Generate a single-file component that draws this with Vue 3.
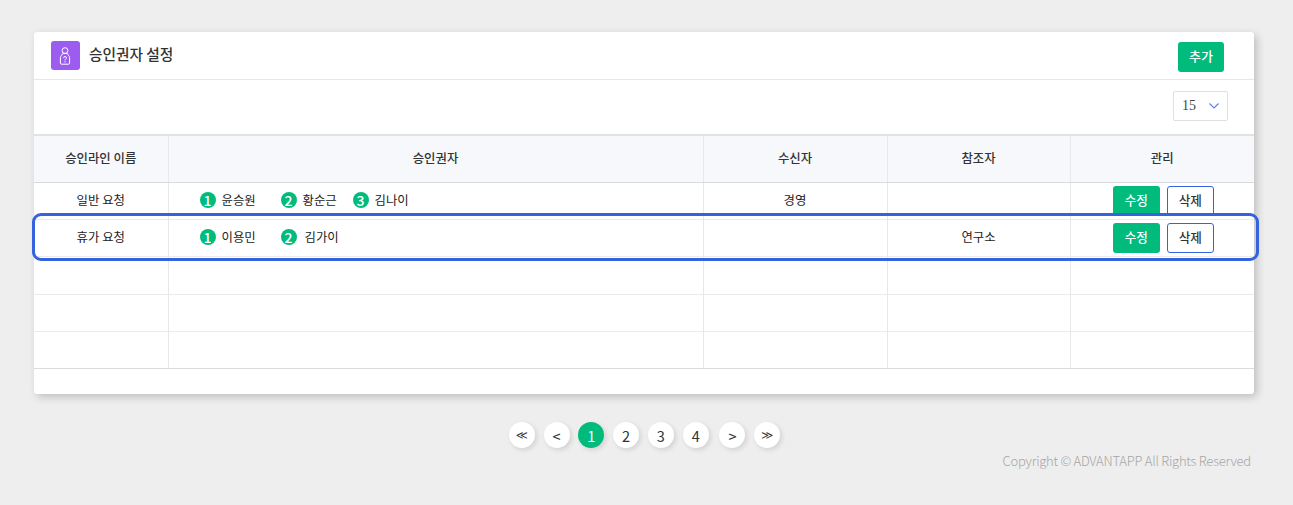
<script setup>
const cols = [134, 535, 184, 183, 184]
const heads = ['승인라인 이름', '승인권자', '수신자', '참조자', '관리']
const rows = [
  { name: '일반 요청', approvers: ['윤승원', '황순근', '김나이'], to: '경영', cc: '' },
  { name: '휴가 요청', approvers: ['이용민', '김가이'], to: '', cc: '연구소' },
  { name: '', approvers: [], to: '', cc: '' },
  { name: '', approvers: [], to: '', cc: '' },
  { name: '', approvers: [], to: '', cc: '' }
]
const pages = [
  { t: '≪', c: 'dbl' },
  { t: '<', c: 'arr' },
  { t: '1', c: 'on' },
  { t: '2', c: '' },
  { t: '3', c: '' },
  { t: '4', c: '' },
  { t: '>', c: 'arr next' },
  { t: '≫', c: 'dbl' }
]
</script>

<template>
  <div class="page">
    <section class="card">
      <header class="head">
        <div class="title">
          <span class="icon">
            <svg width="14" height="20" viewBox="0 0 14 20" fill="none" stroke="#fff" stroke-width="1">
              <g transform="translate(-1 0)">
                <circle cx="7" cy="4.6" r="2.9" />
                <path d="M4.8 7.4 L3.3 9.6 Q2.4 10.6 2.4 11.8 V17.2 Q2.4 18.2 3.4 18.2 H10.6 Q11.6 18.2 11.6 17.2 V11.8 Q11.6 10.6 10.7 9.6 L9.2 7.4 Z" />
                <path d="M5.5 11.8 Q5.6 10.6 7 10.6 Q8.5 10.6 8.5 11.8 Q8.5 12.6 7.6 13.1 Q7 13.4 7 14.3" />
                <path d="M7 15.2 V16.4" />
              </g>
            </svg>
          </span>
          <h1>승인권자 설정</h1>
        </div>
        <button class="btn green add">추가</button>
      </header>
      <div class="tools">
        <div class="select">
          <span>15</span>
          <svg width="10" height="6" viewBox="0 0 10 6" fill="none" stroke="#5b7cf0" stroke-width="1.1">
            <path d="M0.5 0.5 L5 5 L9.5 0.5" />
          </svg>
        </div>
      </div>
      <div class="table-wrap">
        <table>
          <colgroup><col v-for="(c, i) in cols" :key="i" :style="{ width: c + 'px' }" /></colgroup>
          <thead>
            <tr><th v-for="h in heads" :key="h">{{ h }}</th></tr>
          </thead>
          <tbody>
            <tr v-for="(r, i) in rows" :key="i" :class="'row' + i">
              <td>{{ r.name }}</td>
              <td>
                <div class="list">
                  <span v-for="(a, n) in r.approvers" :key="a" class="person" :class="'p' + n">
                    <i class="num">{{ n + 1 }}</i><em>{{ a }}</em>
                  </span>
                </div>
              </td>
              <td>{{ r.to }}</td>
              <td>{{ r.cc }}</td>
              <td class="act">
                <div v-if="r.name" class="actions">
                  <button class="btn green">수정</button>
                  <button class="btn line">삭제</button>
                </div>
              </td>
            </tr>
          </tbody>
        </table>
        <div class="highlight"></div>
      </div>
      <div class="foot"></div>
    </section>
    <nav class="pager">
      <span v-for="(p, i) in pages" :key="i" class="pg" :class="p.c">{{ p.t }}</span>
    </nav>
    <p class="copy">Copyright © ADVANTAPP All Rights Reserved</p>
  </div>
</template>

<style>
html, body { margin: 0; background: #eeeeee; }
</style>

<style scoped>
.page {
  width: 1293px;
  height: 505px;
  box-sizing: border-box;
  padding: 32px 39px 0 34px;
  background: #eeeeee;
  font-family: "Noto Sans CJK KR", "Noto Sans", sans-serif;
  color: #333;
  overflow: hidden;
}
.card {
  width: 1220px;
  height: 362px;
  background: #fff;
  border-radius: 3px;
  box-shadow: 3px 3px 8px rgba(0, 0, 0, 0.2);
  display: flex;
  flex-direction: column;
}
.head {
  height: 47px;
  border-bottom: 1px solid #e6e6e6;
  display: flex;
  align-items: center;
  justify-content: space-between;
  padding: 0 30px 0 17px;
  flex: none;
}
.title { display: flex; align-items: center; gap: 9px; }
.icon {
  width: 29px;
  height: 29px;
  border-radius: 3px;
  background: #9c5cf0;
  display: flex;
  align-items: center;
  justify-content: center;
}
h1 {
  margin: -4px 0 0;
  font-size: 14.7px;
  font-weight: 500;
  color: #333;
  line-height: 20px;
}
.btn {
  font-family: inherit;
  font-size: 13px;
  font-weight: 500;
  border-radius: 3px;
  padding: 0;
  line-height: 1;
  box-sizing: border-box;
}
.green { background: #00bb7c; border: 0; color: #fff; }
.line { background: #fff; border: 1px solid #3563e0; color: #333; }
.add { width: 46px; height: 30px; margin-top: 2px; padding-bottom: 2px; }
.tools {
  height: 54px;
  flex: none;
  box-sizing: border-box;
  padding: 11px 26px 0 0;
  display: flex;
  justify-content: flex-end;
  align-items: flex-start;
}
.select {
  width: 55px;
  height: 30px;
  box-sizing: border-box;
  border: 1px solid #e0e0e0;
  border-radius: 2px;
  display: flex;
  align-items: center;
  justify-content: space-between;
  padding: 0 8px;
  font-family: "Liberation Serif", serif;
  font-size: 14px;
  color: #444;
}
.table-wrap { position: relative; flex: none; }
table {
  width: 1220px;
  border-collapse: collapse;
  table-layout: fixed;
  font-size: 12.4px;
  color: #222;
}
thead tr { height: 47px; background: #f7f8fc; }
th {
  font-weight: 500;
  font-size: 12.4px;
  color: #333;
  border-top: 2px solid #e2e2e2;
  border-bottom: 1px solid #d9d9e0;
  border-left: 1px solid #e8e8ec;
  padding: 0 0 2px;
}
th:first-child, td:first-child { border-left: 0; }
tbody tr { height: 37px; }
tbody tr.row2 { height: 38px; }
td {
  text-align: center;
  padding: 0 0 2px;
  border-left: 1px solid #e8e8ec;
  border-bottom: 1px solid #ebebeb;
  box-sizing: border-box;
}
td.act { padding: 0; }
tbody tr:last-child td { border-bottom: 1px solid #dcdcdc; }
.list { display: flex; align-items: center; padding-left: 31px; }
.person { display: flex; align-items: center; }
.p0 { width: 81px; }
.p1 { width: 72px; }
.person em { font-style: normal; margin-left: 6px; color: #222; }
.row1 .p1 em { margin-left: 8px; }
.num {
  width: 16px;
  height: 16px;
  border-radius: 50%;
  background: #00bb7c;
  color: #fff;
  font-style: normal;
  font-weight: 500;
  font-size: 14px;
  line-height: 16px;
  text-align: center;
  flex: none;
}
.actions {
  display: flex;
  justify-content: center;
  gap: 7px;
  padding-left: 2px;
  position: relative;
  z-index: 1;
}
.actions .btn { width: 47px; height: 30px; font-size: 12.6px; }
.highlight {
  position: absolute;
  left: -2px;
  top: 79px;
  width: 1227px;
  height: 48px;
  box-sizing: border-box;
  border: 3px solid #3563e0;
  border-radius: 9px;
  z-index: 2;
  pointer-events: none;
}
.foot { flex: 1; }
.pager {
  display: flex;
  justify-content: center;
  gap: 8.8px;
  margin-top: 28px;
  width: 1221px;
}
.pg {
  width: 26px;
  height: 26px;
  border-radius: 50%;
  background: #fff;
  box-shadow: 2px 2px 5px rgba(0, 0, 0, 0.12);
  font-size: 14.5px;
  font-weight: 400;
  color: #333;
  display: flex;
  align-items: center;
  justify-content: center;
}
.pg.on { background: #00bb7c; color: #fff; }
.pg.next { margin-left: 2px; }
.pg.dbl { font-family: "DejaVu Sans", sans-serif; font-size: 11.5px; font-weight: 400; }
.copy {
  margin: 3px 3px 0 0;
  text-align: right;
  font-size: 13px;
  font-weight: 300;
  letter-spacing: -0.23px;
  color: #a6a6a6;
  line-height: 19px;
}
</style>
